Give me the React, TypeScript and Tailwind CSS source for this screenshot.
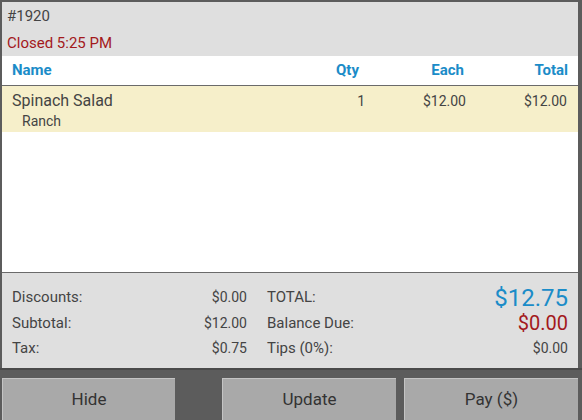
import React from "react";

export default function App() {
  const font = { fontFamily: "Roboto, 'Liberation Sans', sans-serif" };
  return (
    <div style={font} className="w-[582px] h-[420px] bg-[#5c5c5c] flex flex-col overflow-hidden">
      <div className="mt-[2px] ml-[2px] mr-[4px] h-[366px] bg-[#dfdfdf] flex flex-col">
        <div className="h-[54px] px-[5px] flex flex-col text-[15px]">
          <div className="h-[28px] flex items-center text-[#444]">#1920</div>
          <div className="h-[26px] flex items-center text-[#a3191c]">Closed 5:25 PM</div>
        </div>
        <div className="flex-1 bg-white flex flex-col">
          <div className="h-[30px] border-b border-[#6a6a6a] flex items-center text-[15px] font-bold text-[#1b8cc8]">
            <div className="pl-[10px] w-[250px]">Name</div>
            <div className="w-[107px] text-right">Qty</div>
            <div className="w-[105px] text-right">Each</div>
            <div className="w-[104px] text-right">Total</div>
          </div>
          <div className="h-[46px] bg-[#f6efca] flex text-[#444]">
            <div className="pl-[10px] w-[250px] flex flex-col">
              <div className="text-[16px] leading-[20px] mt-[5px]">Spinach Salad</div>
              <div className="text-[14px] leading-[18px] pl-[10px] mt-[1px]">Ranch</div>
            </div>
            <div className="w-[113px] text-right text-[14px] leading-[20px] mt-[5px]">1</div>
            <div className="w-[101px] text-right text-[14px] leading-[20px] mt-[5px]">$12.00</div>
            <div className="w-[101px] text-right text-[14px] leading-[20px] mt-[5px]">$12.00</div>
          </div>
        </div>
        <div className="h-[96px] border-t border-[#6a6a6a] flex px-[10px] pt-[12px] text-[15px] text-[#444]">
          <div className="w-[235px] flex flex-col">
            <div className="h-[25px] flex justify-between items-center"><span>Discounts:</span><span className="text-[14px]">$0.00</span></div>
            <div className="h-[26px] flex justify-between items-center"><span>Subtotal:</span><span className="text-[14px]">$12.00</span></div>
            <div className="h-[25px] flex justify-between items-center"><span>Tax:</span><span className="text-[14px]">$0.75</span></div>
          </div>
          <div className="ml-[20px] w-[301px] flex flex-col">
            <div className="h-[25px] flex justify-between items-center"><span>TOTAL:</span><span className="text-[24px] text-[#1b8cc8]">$12.75</span></div>
            <div className="h-[26px] flex justify-between items-center"><span>Balance Due:</span><span className="text-[20px] text-[#a3191c]">$0.00</span></div>
            <div className="h-[25px] flex justify-between items-center"><span>Tips (0%):</span><span className="text-[14px]">$0.00</span></div>
          </div>
        </div>
      </div>
      <div className="h-[2px] bg-[#4a4a4a]" />
      <div className="flex mt-[8px] h-[42px] text-[17px] text-[#333]">
        <button className="ml-[2px] w-[173px] bg-[#a9a9a9] border-l border-t border-[#c4c4c4] flex items-center justify-center">Hide</button>
        <button className="ml-[47px] w-[174px] bg-[#a9a9a9] border-l border-t border-[#c4c4c4] flex items-center justify-center">Update</button>
        <button className="ml-[8px] w-[174px] bg-[#a9a9a9] border-l border-t border-[#c4c4c4] flex items-center justify-center">Pay ($)</button>
      </div>
    </div>
  );
}
